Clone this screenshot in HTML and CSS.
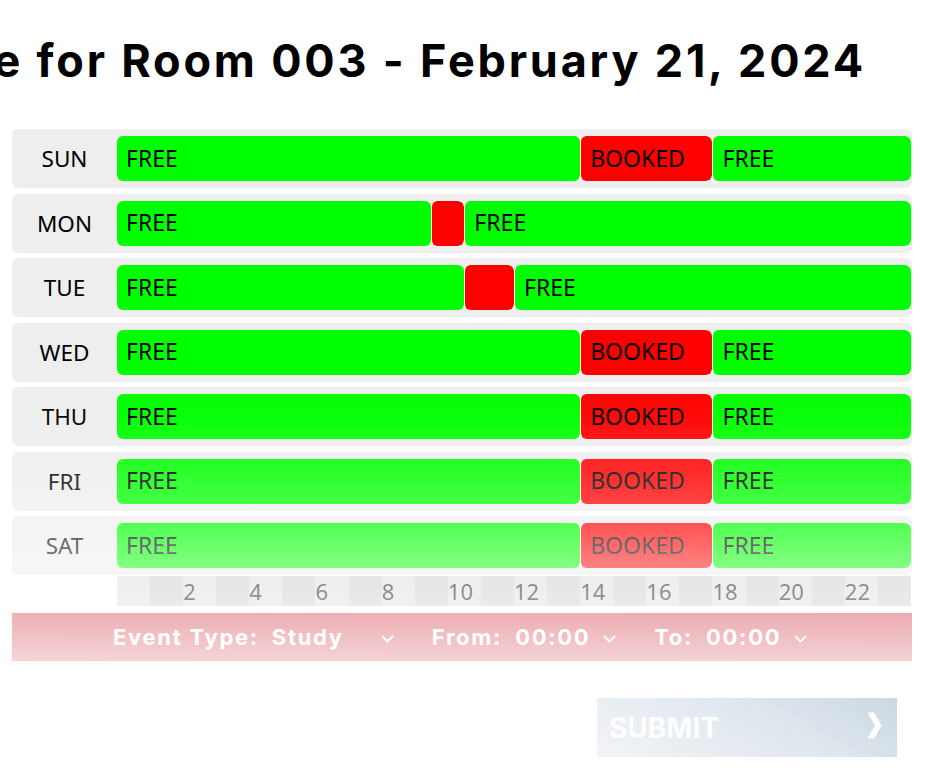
FILE: index.html
```html
<!DOCTYPE html>
<html lang="en">
<head>
<meta charset="utf-8">
<title>Schedule for Room 003</title>
<link rel="stylesheet" href="styles.css">
</head>
<body>
<main class="page">
  <header class="title-row">
    <h1 class="title">Schedule for Room 003 - February 21, 2024</h1>
  </header>

  <section class="schedule">
    <div class="rows">
      <div class="row">
        <div class="day">SUN</div>
        <div class="bars">
          <div class="seg free" style="flex-basis:58.3333%">FREE</div>
          <div class="seg booked" style="flex-basis:16.6667%">BOOKED</div>
          <div class="seg free" style="flex-basis:25%">FREE</div>
        </div>
      </div>
      <div class="row">
        <div class="day">MON</div>
        <div class="bars">
          <div class="seg free" style="flex-basis:39.5833%">FREE</div>
          <div class="seg booked" style="flex-basis:4.1667%"></div>
          <div class="seg free" style="flex-basis:56.25%">FREE</div>
        </div>
      </div>
      <div class="row">
        <div class="day">TUE</div>
        <div class="bars">
          <div class="seg free" style="flex-basis:43.75%">FREE</div>
          <div class="seg booked" style="flex-basis:6.25%"></div>
          <div class="seg free" style="flex-basis:50%">FREE</div>
        </div>
      </div>
      <div class="row">
        <div class="day">WED</div>
        <div class="bars">
          <div class="seg free" style="flex-basis:58.3333%">FREE</div>
          <div class="seg booked" style="flex-basis:16.6667%">BOOKED</div>
          <div class="seg free" style="flex-basis:25%">FREE</div>
        </div>
      </div>
      <div class="row">
        <div class="day">THU</div>
        <div class="bars">
          <div class="seg free" style="flex-basis:58.3333%">FREE</div>
          <div class="seg booked" style="flex-basis:16.6667%">BOOKED</div>
          <div class="seg free" style="flex-basis:25%">FREE</div>
        </div>
      </div>
      <div class="row">
        <div class="day">FRI</div>
        <div class="bars">
          <div class="seg free" style="flex-basis:58.3333%">FREE</div>
          <div class="seg booked" style="flex-basis:16.6667%">BOOKED</div>
          <div class="seg free" style="flex-basis:25%">FREE</div>
        </div>
      </div>
      <div class="row">
        <div class="day">SAT</div>
        <div class="bars">
          <div class="seg free" style="flex-basis:58.3333%">FREE</div>
          <div class="seg booked" style="flex-basis:16.6667%">BOOKED</div>
          <div class="seg free" style="flex-basis:25%">FREE</div>
        </div>
      </div>
    </div>

    <div class="axis">
      <div class="hour"></div><div class="hour odd"></div>
      <div class="hour">2</div><div class="hour odd"></div>
      <div class="hour">4</div><div class="hour odd"></div>
      <div class="hour">6</div><div class="hour odd"></div>
      <div class="hour">8</div><div class="hour odd"></div>
      <div class="hour">10</div><div class="hour odd"></div>
      <div class="hour">12</div><div class="hour odd"></div>
      <div class="hour">14</div><div class="hour odd"></div>
      <div class="hour">16</div><div class="hour odd"></div>
      <div class="hour">18</div><div class="hour odd"></div>
      <div class="hour">20</div><div class="hour odd"></div>
      <div class="hour">22</div><div class="hour odd"></div>
    </div>

    <form class="event-bar">
      <div class="field">
        <span class="label">Event Type:</span>
        <span class="select wide">Study
          <svg class="chev" viewBox="0 0 13 8" width="13" height="8"><path d="M1.5 1.5 L6.5 6.5 L11.5 1.5" fill="none" stroke="#fff" stroke-width="2" stroke-linecap="round" stroke-linejoin="round"/></svg>
        </span>
      </div>
      <div class="field">
        <span class="label">From:</span>
        <span class="select">00:00
          <svg class="chev" viewBox="0 0 13 8" width="13" height="8"><path d="M1.5 1.5 L6.5 6.5 L11.5 1.5" fill="none" stroke="#fff" stroke-width="2" stroke-linecap="round" stroke-linejoin="round"/></svg>
        </span>
      </div>
      <div class="field">
        <span class="label">To:</span>
        <span class="select">00:00
          <svg class="chev" viewBox="0 0 13 8" width="13" height="8"><path d="M1.5 1.5 L6.5 6.5 L11.5 1.5" fill="none" stroke="#fff" stroke-width="2" stroke-linecap="round" stroke-linejoin="round"/></svg>
        </span>
      </div>
    </form>

    <div class="fade"></div>
  </section>

  <div class="actions">
    <button class="submit" type="button">
      <span>SUBMIT</span>
      <svg class="arrow" viewBox="0 0 15 27" width="15" height="27"><path d="M0.5 0.5 H7 L14.5 13.5 L7 26.5 H0.5 L8 13.5 Z" fill="#fff"/></svg>
    </button>
  </div>
</main>
</body>
</html>
```

FILE: styles.css
```css
html, body {
  margin: 0;
  padding: 0;
  background: #ffffff;
  overflow: hidden;
}

.page {
  width: 942px;
  height: 772px;
  padding-top: 34px;
  box-sizing: border-box;
  overflow: hidden;
}

.title-row {
  display: flex;
  justify-content: flex-end;
  padding-right: 76px;
  height: 54px;
  margin-bottom: 41px;
}

.title {
  margin: 0;
  white-space: nowrap;
  flex-shrink: 0;
  font-family: "Inter", "Liberation Sans", sans-serif;
  font-weight: 700;
  font-size: 45px;
  letter-spacing: 2.8px;
  line-height: 54px;
  color: #000;
}

.schedule {
  position: relative;
  margin-left: 12px;
  width: 900px;
}

.rows {
  display: flex;
  flex-direction: column;
  gap: 5.5px;
}

.row {
  display: grid;
  grid-template-columns: 105px 1fr;
  height: 59px;
  padding-right: 1px;
  background: #eeeeee;
  border-radius: 6px;
  align-items: center;
}

.day {
  text-align: center;
  font-family: "Noto Sans", "DejaVu Sans", sans-serif;
  font-size: 22.5px;
  color: #000;
}

.bars {
  display: flex;
  height: 45px;
}

.seg {
  box-sizing: border-box;
  flex-grow: 0;
  flex-shrink: 0;
  height: 45px;
  border-radius: 6px;
  padding-left: 9px;
  padding-bottom: 2px;
  display: flex;
  align-items: center;
  font-family: "Noto Sans", "DejaVu Sans", sans-serif;
  font-size: 23px;
  color: #000;
  white-space: nowrap;
  overflow: hidden;
  background-clip: padding-box;
}

.seg + .seg {
  border-left: 1px solid transparent;
}

.free { background-color: #00ff00; }
.booked { background-color: #ff0000; }

.axis {
  display: grid;
  grid-template-columns: repeat(24, 1fr);
  margin-left: 105px;
  margin-right: 1px;
  margin-top: 1px;
  height: 30px;
}

.hour {
  background: #dcdcdc;
  font-family: "Noto Sans", "DejaVu Sans", sans-serif;
  font-size: 22px;
  line-height: 30px;
  color: #000;
  white-space: nowrap;
}

.hour.odd { background: #cbcbcb; }

.event-bar {
  margin: 7px 0 0;
  height: 48px;
  background: linear-gradient(90deg, #cd2a38, #c81b2a);
  display: flex;
  align-items: center;
  gap: 38px;
  padding-left: 101px;
  box-sizing: border-box;
  font-family: "Inter", "Liberation Sans", sans-serif;
  font-weight: 700;
  font-size: 22px;
  letter-spacing: 1.7px;
  color: #ffffff;
}

.field {
  display: flex;
  align-items: center;
  gap: 13px;
}

.select {
  display: flex;
  align-items: center;
  justify-content: space-between;
  width: 101px;
}

.select.wide { width: 122px; }

.chev {
  display: block;
  margin-top: 3px;
}

.fade {
  position: absolute;
  inset: 0;
  pointer-events: none;
  background: linear-gradient(180deg,
    rgba(255,255,255,0) 0px,
    rgba(255,255,255,0) 251px,
    rgba(255,255,255,0.04) 288px,
    rgba(255,255,255,0.2) 353px,
    rgba(255,255,255,0.33) 396px,
    rgba(255,255,255,0.5) 436px,
    rgba(255,255,255,0.55) 461px,
    rgba(255,255,255,0.63) 484px,
    rgba(255,255,255,0.8) 532px);
}

.actions {
  display: flex;
  justify-content: flex-end;
  width: 897px;
  margin-top: 37px;
}

.submit {
  width: 300px;
  height: 59px;
  border: 0;
  padding: 0 15px 0 12px;
  display: flex;
  align-items: center;
  justify-content: space-between;
  background: linear-gradient(30deg, #f1f4f7 0%, #e3e9f0 50%, #cbd8e3 100%);
  font-family: "Inter", "Liberation Sans", sans-serif;
  font-weight: 700;
  font-size: 28px;
  color: rgba(255,255,255,0.92);
}

.arrow {
  display: block;
  margin-top: -4px;
}
```
